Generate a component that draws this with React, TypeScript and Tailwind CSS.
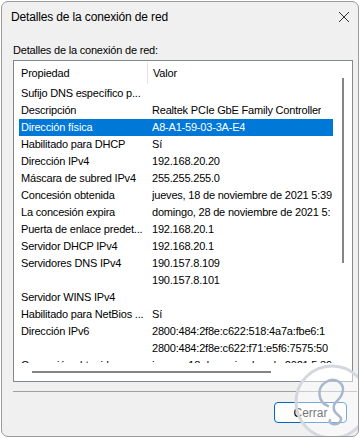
import React from 'react';

const rows: { prop: string; value: string; selected?: boolean }[] = [
  { prop: 'Sufijo DNS específico p...', value: '' },
  { prop: 'Descripción', value: 'Realtek PCIe GbE Family Controller' },
  { prop: 'Dirección física', value: 'A8-A1-59-03-3A-E4', selected: true },
  { prop: 'Habilitado para DHCP', value: 'Sí' },
  { prop: 'Dirección IPv4', value: '192.168.20.20' },
  { prop: 'Máscara de subred IPv4', value: '255.255.255.0' },
  { prop: 'Concesión obtenida', value: 'jueves, 18 de noviembre de 2021 5:39' },
  { prop: 'La concesión expira', value: 'domingo, 28 de noviembre de 2021 5:' },
  { prop: 'Puerta de enlace predet...', value: '192.168.20.1' },
  { prop: 'Servidor DHCP IPv4', value: '192.168.20.1' },
  { prop: 'Servidores DNS IPv4', value: '190.157.8.109' },
  { prop: '', value: '190.157.8.101' },
  { prop: 'Servidor WINS IPv4', value: '' },
  { prop: 'Habilitado para NetBios ...', value: 'Sí' },
  { prop: 'Dirección IPv6', value: '2800:484:2f8e:c622:518:4a7a:fbe6:1' },
  { prop: '', value: '2800:484:2f8e:c622:f71:e5f6:7575:50' },
  { prop: 'Concesión obtenida', value: 'jueves, 18 de noviembre de 2021 5:39' },
];

const App: React.FC = () => {
  return (
    <div className="w-[362px] h-[438px] bg-white pt-px pl-px">
      <div className="relative w-[358px] h-[436px] rounded-[7px] border border-[#9c9c9c] bg-[#f0f0f0] flex flex-col overflow-hidden text-black [font-family:'Liberation_Sans',Arial,sans-serif]">
        {/* Title bar */}
        <div className="h-[30px] flex items-center justify-between pl-[9px] pr-[6px] shrink-0">
          <span className="text-[12px] tracking-[-0.15px]">Detalles de la conexión de red</span>
          <svg width="12" height="12" viewBox="0 0 12 12" className="mr-[2px]">
            <path d="M1 1 L11 11 M11 1 L1 11" stroke="#333" strokeWidth="1" />
          </svg>
        </div>

        {/* Body */}
        <div className="px-[11px] flex flex-col">
          <div className="h-[28px] flex items-end pb-[2px] text-[11px] tracking-[-0.2px]">
            Detalles de la conexión de red:
          </div>

          <div className="w-[340px] h-[322px] border border-[#828790] bg-white flex text-[11px] tracking-[-0.2px]">
            <div className="w-[320px] flex flex-col">
              {/* Header */}
              <div className="h-[24px] flex items-center shrink-0">
                <div className="w-[134px] h-[22px] flex items-center pl-[7px] border-r border-[#e5e5e5]">
                  Propiedad
                </div>
                <div className="pl-[5px]">Valor</div>
              </div>

              {/* Rows */}
              <div className="h-[278px] overflow-hidden">
                {rows.map((r, i) => (
                  <div
                    key={i}
                    className={`ml-[5px] w-[314px] h-[17px] flex items-center whitespace-nowrap overflow-hidden ${
                      r.selected ? 'bg-[#0078d7] text-white' : ''
                    }`}
                  >
                    <div className="w-[133px] shrink-0 pl-[2px]">{r.prop}</div>
                    <div className="overflow-hidden">{r.value}</div>
                  </div>
                ))}
              </div>

              {/* Horizontal scrollbar */}
              <div className="h-[18px] flex items-center pl-[18px]">
                <div className="w-[239px] h-[2px] bg-[#858585]" />
              </div>
            </div>

            {/* Vertical scrollbar */}
            <div className="w-[18px] flex justify-center pt-[17px]">
              <div className="w-[2px] h-[185px] bg-[#858585]" />
            </div>
          </div>

          <div className="mt-[9px] h-px bg-[#a0a0a0] w-[344px]" />

          <div className="flex justify-end pt-[10px]">
            <button className="w-[73px] h-[21px] rounded-[4px] border border-[#0067c0] bg-[#fdfdfd] text-[12px] flex items-center justify-center">
              Cerrar
            </button>
          </div>
        </div>

        {/* Watermark */}
        <svg
          width="80"
          height="80"
          viewBox="0 0 80 80"
          className="absolute left-[290px] top-[360px] pointer-events-none"
        >
          <circle cx="40" cy="40" r="36" fill="white" fillOpacity="0.45" stroke="#d4d8de" strokeWidth="3" />
          <path
            d="M36 44 C26 40 24 26 34 20 C44 14 54 22 50 32 C47 40 40 40 42 48 C44 54 52 54 48 60 C44 64 36 62 38 58"
            fill="none"
            stroke="#a9b7cc"
            strokeWidth="2.5"
            strokeLinecap="round"
          />
        </svg>
      </div>
    </div>
  );
};

export default App;
